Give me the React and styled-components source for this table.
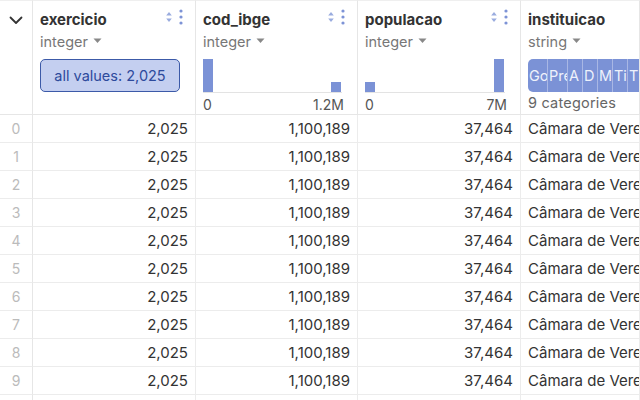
import React from "react";
import styled, { createGlobalStyle } from "styled-components";

const Global = createGlobalStyle`
  html, body { margin: 0; padding: 0; background: #fff; }
  body { font-family: Inter, "Noto Sans", sans-serif; overflow: hidden; }
`;

const Grid = styled.div`
  display: grid;
  grid-template-columns: 33px 163px 162px 163px 1fr;
  grid-auto-rows: 28px;
  grid-template-rows: 115px;
  width: 640px;
  height: 400px;
  overflow: hidden;
`;

const Corner = styled.div`
  border-right: 1px solid #e6e6e6;
  border-bottom: 1px solid #e6e6e6;
  border-top: 1px solid #efefef;
  display: flex;
  justify-content: center;
  padding-top: 11px;
  box-sizing: border-box;
`;

const HeadCell = styled.div`
  border-right: 1px solid #e6e6e6;
  border-bottom: 1px solid #e6e6e6;
  border-top: 1px solid #efefef;
  box-sizing: border-box;
  padding: 7px 15px 0 7px;
  display: flex;
  flex-direction: column;
  min-width: 0;
  overflow: hidden;
`;

const TitleRow = styled.div`
  display: flex;
  align-items: center;
  justify-content: space-between;
  height: 22px;
`;

const Name = styled.span`
  font-size: 15px;
  font-weight: 700;
  color: #333;
`;

const Icons = styled.div`
  display: flex;
  align-items: center;
  gap: 6px;
  margin-top: -4px;
  margin-right: -3px;
`;

const TypeLine = styled.div`
  display: flex;
  align-items: center;
  gap: 5px;
  font-size: 14.5px;
  color: #777;
  height: 22px;
`;

const Pill = styled.div`
  margin-top: 7px;
  height: 33px;
  box-sizing: border-box;
  border: 1px solid #3c5aa8;
  background: #c4cff0;
  border-radius: 5px;
  color: #2d4a9c;
  font-size: 14.5px;
  display: flex;
  align-items: center;
  justify-content: center;
`;

const Hist = styled.div`
  margin-top: 7px;
  height: 33px;
  border-bottom: 1px solid #e3e3e3;
  display: flex;
  align-items: flex-end;
  justify-content: space-between;
  padding-right: 1px;
`;

const Bar = styled.div`
  width: 10px;
  background: #7b92d6;
`;

const Axis = styled.div`
  display: flex;
  justify-content: space-between;
  font-size: 14px;
  color: #555;
  margin-top: 3px;
  margin-right: -2px;
`;

const Cats = styled.div`
  margin-top: 7px;
  height: 33px;
  display: flex;
  border-radius: 5px 0 0 5px;
  overflow: hidden;
  background: #7b92d6;
  width: 200px;
  flex: 0 0 auto;
`;

const Seg = styled.div`
  flex: 0 0 ${(p) => p.w}px;
  box-sizing: border-box;
  border-right: 1px solid #a9b7e4;
  color: #eef1fb;
  font-size: 14.5px;
  display: flex;
  align-items: center;
  padding-left: 1px;
  overflow: hidden;
  white-space: nowrap;
`;

const CatLabel = styled.div`
  font-size: 14.5px;
  color: #666;
  margin-top: 2px;
  letter-spacing: 0.2px;
  white-space: nowrap;
`;

const IndexCell = styled.div`
  border-right: 1px solid #e6e6e6;
  border-bottom: 1px solid #ececec;
  box-sizing: border-box;
  display: flex;
  align-items: center;
  justify-content: center;
  font-size: 14px;
  color: #bbb;
`;

const Cell = styled.div`
  border-right: 1px solid #ececec;
  border-bottom: 1px solid #ececec;
  box-sizing: border-box;
  display: flex;
  align-items: center;
  justify-content: ${(p) => (p.left ? "flex-start" : "flex-end")};
  padding: 0 7px;
  font-size: 15px;
  color: #333;
  white-space: nowrap;
  overflow: hidden;
`;

const Chevron = () => (
  <svg width="16" height="16" viewBox="0 0 16 16">
    <path d="M2.5 5.5 L8 11 L13.5 5.5" fill="none" stroke="#333" strokeWidth="1.8" strokeLinecap="round" strokeLinejoin="round" />
  </svg>
);

const Sort = () => (
  <svg width="8" height="14" viewBox="0 0 8 14">
    <path d="M4 2 L6.8 5.6 L1.2 5.6 Z" fill="#9aacdf" />
    <path d="M4 12 L6.8 8.4 L1.2 8.4 Z" fill="#9aacdf" />
  </svg>
);

const Dots = () => (
  <svg width="4" height="16" viewBox="0 0 4 16">
    <circle cx="2" cy="2" r="1.6" fill="#7d93d6" />
    <circle cx="2" cy="8" r="1.6" fill="#7d93d6" />
    <circle cx="2" cy="14" r="1.6" fill="#7d93d6" />
  </svg>
);

const Caret = () => (
  <svg width="9" height="6" viewBox="0 0 9 6">
    <path d="M0.5 0.5 L8.5 0.5 L4.5 5 Z" fill="#888" />
  </svg>
);

const Header = ({ name, type, children, noIcons }) => (
  <HeadCell>
    <TitleRow>
      <Name>{name}</Name>
      {!noIcons && (
        <Icons>
          <Sort />
          <Dots />
        </Icons>
      )}
    </TitleRow>
    <TypeLine>
      {type} <Caret />
    </TypeLine>
    {children}
  </HeadCell>
);

const segs = [
  ["Go", 20],
  ["Pre", 20],
  ["A", 15],
  ["D", 15],
  ["M", 15],
  ["Ti", 15],
  ["Ti", 20],
];

export default function App() {
  const rows = Array.from({ length: 10 }, (_, i) => i);
  return (
    <>
      <Global />
      <Grid>
        <Corner>
          <Chevron />
        </Corner>
        <Header name="exercicio" type="integer">
          <Pill>all values: 2,025</Pill>
        </Header>
        <Header name="cod_ibge" type="integer">
          <Hist>
            <Bar style={{ height: 33 }} />
            <Bar style={{ height: 10 }} />
          </Hist>
          <Axis>
            <span>0</span>
            <span>1.2M</span>
          </Axis>
        </Header>
        <Header name="populacao" type="integer">
          <Hist>
            <Bar style={{ height: 10 }} />
            <Bar style={{ height: 33 }} />
          </Hist>
          <Axis>
            <span>0</span>
            <span>7M</span>
          </Axis>
        </Header>
        <Header name="instituicao" type="string" noIcons>
          <Cats>
            {segs.map(([t, w], i) => (
              <Seg key={i} w={w}>
                {t}
              </Seg>
            ))}
          </Cats>
          <CatLabel>9 categories</CatLabel>
        </Header>
        {rows.map((i) => (
          <React.Fragment key={i}>
            <IndexCell>{i}</IndexCell>
            <Cell>2,025</Cell>
            <Cell>1,100,189</Cell>
            <Cell>37,464</Cell>
            <Cell left>Câmara de Vereadores</Cell>
          </React.Fragment>
        ))}
        <IndexCell />
        <Cell />
        <Cell />
        <Cell />
        <Cell left />
      </Grid>
    </>
  );
}
